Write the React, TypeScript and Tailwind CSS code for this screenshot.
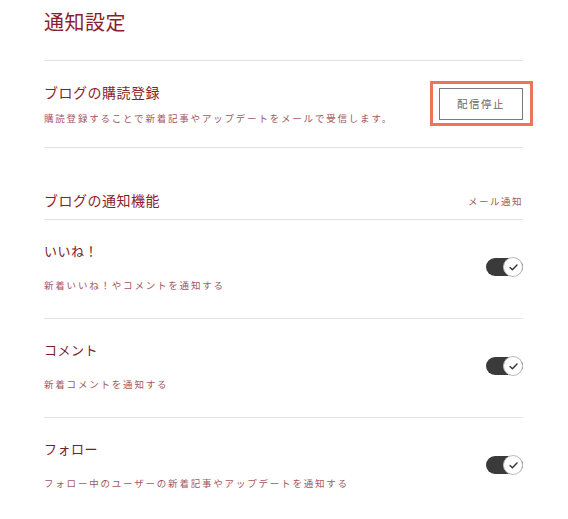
import React from "react";

const font = { fontFamily: '"Noto Sans CJK JP", "Noto Sans", sans-serif' };

function Toggle() {
  return (
    <div className="relative flex h-[18px] w-[37px] shrink-0 items-center rounded-full bg-[#3a3a3a]">
      <div className="absolute right-0 top-[-1px] flex h-[20px] w-[20px] items-center justify-center rounded-full border border-[#bdbdbd] bg-white">
        <svg width="9" height="7" viewBox="0 0 9 7" fill="none">
          <path d="M1 3.6 L3.4 5.8 L8 1" stroke="#333" strokeWidth="1.4" strokeLinecap="round" strokeLinejoin="round" />
        </svg>
      </div>
    </div>
  );
}

function Row({ title, desc, last }: { title: string; desc: string; last?: boolean }) {
  return (
    <div className={`flex items-center justify-between pt-[21px] pb-[25px] ${last ? "" : "border-b border-[#e9e1e2]"}`}>
      <div className="flex flex-col">
        <div className="text-[13px] leading-[20px] text-[#7d1b26] tracking-[0.5px]">{title}</div>
        <div className="mt-[16px] text-[9.5px] leading-[16px] tracking-[1.8px] text-[#a45661]">{desc}</div>
      </div>
      <Toggle />
    </div>
  );
}

export default function App() {
  return (
    <div className="min-h-[519px] w-[568px] bg-white" style={font}>
      <div className="ml-[44px] w-[479px]">
        <div className="border-b border-[#e9e1e2] pt-[8px] pb-[24px]">
          <h1 className="text-[20px] leading-[28px] text-[#8b1e2a] tracking-[0.5px]">通知設定</h1>
        </div>
        <div className="flex items-center justify-between border-b border-[#e9e1e2] pt-[21px] pb-[21px]">
          <div className="flex flex-col">
            <div className="text-[14px] leading-[20px] tracking-[0.5px] text-[#8b1e2a]">ブログの購読登録</div>
            <div className="mt-[8px] text-[9.5px] leading-[16px] tracking-[1.8px] text-[#a45661]">
              購読登録することで新着記事やアップデートをメールで受信します。
            </div>
          </div>
          <div className="relative">
            <span className="pointer-events-none absolute top-[-7px] bottom-[-6px] left-[-9px] right-[-10px] border-[3px] border-[#ec7459]" />
            <button className="flex h-[32px] w-[84px] items-center justify-center border border-[#7a7a7a] bg-white text-[10.5px] tracking-[1.5px] text-[#666]">
              配信停止
            </button>
          </div>
        </div>
        <div className="flex items-end justify-between border-b border-[#e9e1e2] pt-[42px] pb-[9px]">
          <div className="text-[14px] leading-[20px] tracking-[0.5px] text-[#8b1e2a]">ブログの通知機能</div>
          <div className="text-[9.5px] leading-[16px] tracking-[1.5px] text-[#a45661] pb-[1px]">メール通知</div>
        </div>
        <Row title="いいね！" desc="新着いいね！やコメントを通知する" />
        <Row title="コメント" desc="新着コメントを通知する" />
        <Row title="フォロー" desc="フォロー中のユーザーの新着記事やアップデートを通知する" last />
      </div>
    </div>
  );
}
